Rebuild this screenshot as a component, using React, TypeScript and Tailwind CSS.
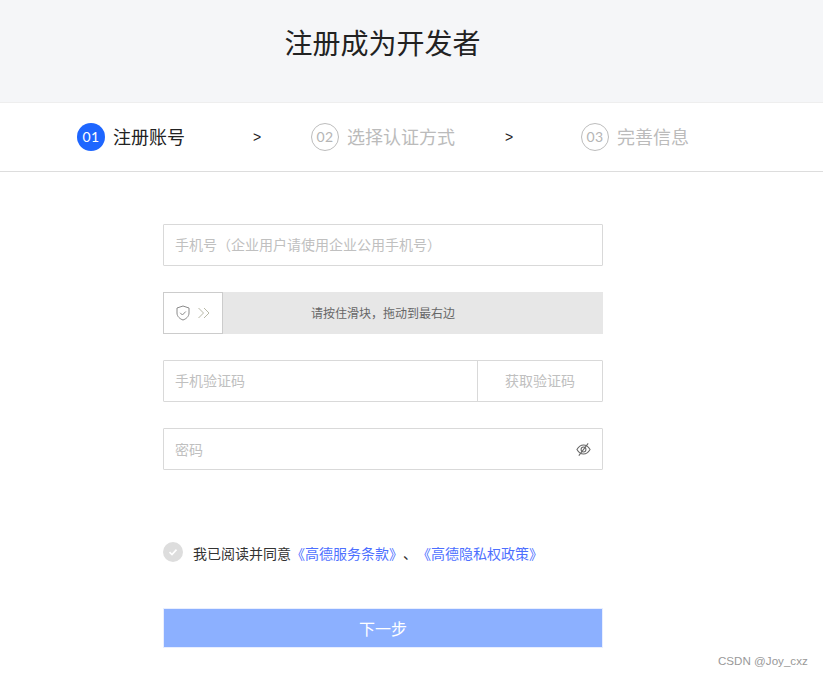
import React from "react";

const font = { fontFamily: '"Noto Sans CJK SC", "Liberation Sans", sans-serif' };

function Step({ n, label, active, w }: { n: string; label: string; active?: boolean; w: string }) {
  return (
    <div className={`flex items-center ${w}`}>
      <div
        className={`w-7 h-7 rounded-full flex items-center justify-center text-[14px] font-['Lato',sans-serif] tracking-[0.5px] shrink-0 ${
          active ? "bg-[#1e66ff] text-white" : "border border-[#bdbdbd] text-[#b5b5b5]"
        }`}
      >
        {n}
      </div>
      <span className={`ml-2 pb-[2px] text-lg leading-7 ${active ? "text-[#222222]" : "text-[#bbbbbb]"}`}>{label}</span>
    </div>
  );
}

export default function App() {
  return (
    <div className="relative w-[823px] h-[677px] bg-white overflow-hidden" style={font}>
      <header className="h-[103px] bg-[#f5f6f8] border-b border-[#eeeeee] flex justify-center pt-[20px] pr-[58px]">
        <h1 className="text-[28px] leading-[44px] text-[#222222]">注册成为开发者</h1>
      </header>
      <nav className="h-[69px] border-b border-[#dddddd] flex items-center pl-[77px] pb-[1px]">
        <Step n="01" label="注册账号" active w="w-[176px]" />
        <span className="w-[58px] text-sm text-[#222222] font-['Liberation_Sans',sans-serif]">&gt;</span>
        <Step n="02" label="选择认证方式" w="w-[194px]" />
        <span className="w-[76px] text-sm text-[#222222] font-['Liberation_Sans',sans-serif]">&gt;</span>
        <Step n="03" label="完善信息" w="w-[120px]" />
      </nav>
      <main className="w-[440px] ml-[163px] pt-[52px] flex flex-col gap-[26px]">
        <div className="h-[42px] border border-[#d9d9d9] rounded-[1px] flex items-center px-[11px] pb-[2px] text-sm text-[#c0c0c0]">
          手机号（企业用户请使用企业公用手机号）
        </div>
        <div className="h-[42px] bg-[#e7e7e7] flex items-center">
          <div className="w-[60px] h-[42px] bg-white border border-[#cccccc] flex items-center justify-center gap-[6px] shrink-0">
            <svg width="16" height="16" viewBox="0 0 16 16" fill="none" stroke="#8a8a8a" strokeWidth="1">
              <path d="M8 1 L14 3 V8 C14 11.5 11 14 8 15 C5 14 2 11.5 2 8 V3 Z" />
              <path d="M5.2 7.8 L7.4 10 L10.8 6.5" />
            </svg>
            <svg width="14" height="12" viewBox="0 0 14 12" fill="none" stroke="#b9b9a8" strokeWidth="1">
              <path d="M1.5 1 L6.5 6 L1.5 11" />
              <path d="M7 1 L12 6 L7 11" />
            </svg>
          </div>
          <span className="flex-1 pr-[60px] text-center text-xs text-[#666666]">请按住滑块，拖动到最右边</span>
        </div>
        <div className="h-[42px] border border-[#d9d9d9] rounded-[1px] flex items-center text-sm text-[#c0c0c0]">
          <span className="flex-1 px-[11px] pb-[2px]">手机验证码</span>
          <span className="w-[125px] h-full pb-[2px] border-l border-[#d9d9d9] flex items-center justify-center">获取验证码</span>
        </div>
        <div className="h-[42px] border border-[#d9d9d9] rounded-[1px] flex items-center justify-between pl-[11px] pr-[11px] text-sm text-[#c0c0c0]">
          <span>密码</span>
          <svg width="15" height="15" viewBox="0 0 16 16" fill="none" stroke="#666666" strokeWidth="1.1">
            <path d="M1 8 C3 4.5 5.5 3.2 8 3.2 C10.5 3.2 13 4.5 15 8 C13 11.5 10.5 12.8 8 12.8 C5.5 12.8 3 11.5 1 8 Z" />
            <circle cx="8" cy="8" r="2.6" />
            <path d="M13 1.5 L3 14.5" />
          </svg>
        </div>
        <div className="mt-[46px] h-5 flex items-center">
          <div className="w-5 h-5 rounded-full bg-[#dddddd] flex items-center justify-center shrink-0">
            <svg width="12" height="12" viewBox="0 0 12 12" fill="none" stroke="#ffffff" strokeWidth="1.6">
              <path d="M2.5 6.2 L5 8.6 L9.5 3.6" />
            </svg>
          </div>
          <p className="ml-[10px] pt-[1px] text-sm text-[#333333] whitespace-nowrap [text-spacing-trim:space-all] [font-feature-settings:'chws'_0]">
            我已阅读并同意
            <span className="text-[#4d6fff]">《高德服务条款》</span>
            、
            <span className="text-[#4d6fff]">《高德隐私权政策》</span>
          </p>
        </div>
        <button className="mt-[20px] h-10 bg-[#8cb0ff] border border-[#e8eeff] text-white text-base">下一步</button>
      </main>
      <div className="absolute left-[718px] top-[653px] text-[11.6px] leading-4 text-[#999999] font-['Liberation_Sans',sans-serif]">
        CSDN @Joy_cxz
      </div>
    </div>
  );
}
